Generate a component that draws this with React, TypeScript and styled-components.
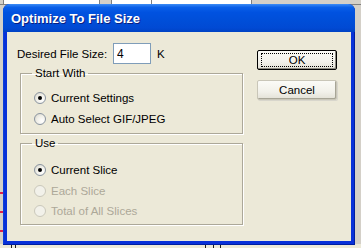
import React from 'react';
import styled, { createGlobalStyle, css } from 'styled-components';

const GlobalStyle = createGlobalStyle`
  html, body {
    margin: 0;
    padding: 0;
    background: #d4d0c8;
  }
  * {
    box-sizing: border-box;
  }
`;

const uiFont = `'Liberation Sans', Arial, sans-serif`;

const Desktop = styled.div`
  position: relative;
  width: 361px;
  height: 248px;
  overflow: hidden;
  background: #d4d0c8;
  font-family: ${uiFont};
`;

const Backdrop = styled.div`
  display: flex;
  flex-direction: column;
  height: 100%;
`;

const HeaderStrip = styled.div`
  display: flex;
  height: 5px;
  border-bottom: 1px solid #808080;
`;

const HeaderCell = styled.div<{ $w: number; $light?: boolean }>`
  width: ${({ $w }) => $w}px;
  flex: none;
  background: ${({ $light }) => ($light ? '#ffffff' : '#d4d0c8')};
  border-right: 1px solid #808080;
`;

const MiddleArea = styled.div`
  flex: 1;
  display: flex;
`;

const Gutter = styled.div`
  width: 3px;
  display: flex;
  flex-direction: column;
  padding-top: 187px;
  gap: 17px;
`;

const RedMark = styled.div`
  height: 2px;
  width: 3px;
  background: #e0204a;
`;

const FooterStrip = styled.div`
  display: flex;
  height: 4px;
  background: #ece9d8;
`;

const FooterCell = styled.div<{ $w: number }>`
  width: ${({ $w }) => $w}px;
  flex: none;
  border-right: 1px solid #202020;
`;

const Window = styled.div`
  position: absolute;
  left: 3px;
  top: 4px;
  width: 352px;
  height: 241px;
  display: flex;
  flex-direction: column;
  background: #0831d9;
  border-radius: 7px 7px 0 0;
  box-shadow: inset -1px -1px 0 #001ea0, inset 1px 0 0 #0a3fd9;
`;

const TitleBar = styled.div`
  height: 28px;
  flex: none;
  display: flex;
  align-items: center;
  padding-left: 8px;
  border-radius: 7px 7px 0 0;
  background: linear-gradient(
    to bottom,
    #3d8cf5 0%,
    #0a5fe8 12%,
    #0052e0 30%,
    #004ed8 60%,
    #014ad4 85%,
    #0042c4 100%
  );
`;

const TitleText = styled.span`
  color: #ffffff;
  font-family: ${uiFont};
  font-weight: bold;
  font-size: 13px;
  text-shadow: 1px 1px 0 #0a1e80;
  padding-top: 1px;
`;

const Client = styled.div`
  flex: 1;
  margin: 0 4px 4px 4px;
  background: #ece9d8;
  display: flex;
  padding: 11px 0 0 10px;
  font-size: 11px;
  color: #000000;
`;

const FormColumn = styled.div`
  width: 226px;
  display: flex;
  flex-direction: column;
`;

const SizeRow = styled.div`
  display: flex;
  align-items: center;
  height: 21px;
`;

const Label = styled.span`
  font-size: 11.5px;
  width: 96px;
`;

const SizeInput = styled.input`
  width: 38px;
  height: 21px;
  border: 1px solid #7f9db9;
  background: #ffffff;
  font-family: ${uiFont};
  font-size: 12px;
  padding: 0 3px;
  outline: none;
`;

const Unit = styled.span`
  font-size: 11.5px;
  margin-left: 6px;
`;

const GroupBox = styled.fieldset<{ $top: number; $height: number }>`
  margin: ${({ $top }) => $top}px 0 0 3px;
  height: ${({ $height }) => $height}px;
  padding: 0 0 0 13px;
  border: 1px solid #aca899;
  box-shadow: 1px 1px 0 #ffffff, inset 1px 1px 0 #ffffff;
  display: flex;
  flex-direction: column;
`;

const Legend = styled.legend`
  font-size: 11.5px;
  padding: 0 3px;
  margin-left: -2px;
`;

const RadioRow = styled.div<{ $disabled?: boolean }>`
  display: flex;
  align-items: center;
  height: 20.5px;
  font-size: 11.5px;
  color: ${({ $disabled }) => ($disabled ? '#aca899' : '#000000')};
`;

const RadioDot = styled.span<{ $checked?: boolean; $disabled?: boolean }>`
  width: 12px;
  height: 12px;
  border-radius: 50%;
  flex: none;
  margin-right: 5px;
  position: relative;
  border: 1px solid ${({ $disabled }) => ($disabled ? '#cac8bb' : '#8a94a0')};
  background: ${({ $disabled }) =>
    $disabled
      ? '#f2f1ea'
      : 'radial-gradient(circle at 70% 70%, #ffffff 0%, #f0efe8 50%, #d6d3c6 100%)'};
  ${({ $checked }) =>
    $checked &&
    css`
      &::after {
        content: '';
        position: absolute;
        left: 3px;
        top: 3px;
        width: 4px;
        height: 4px;
        border-radius: 50%;
        background: #000000;
      }
    `}
`;

const RadioGroup = styled.div<{ $pad: number }>`
  display: flex;
  flex-direction: column;
  padding-top: ${({ $pad }) => $pad}px;
`;

const ButtonColumn = styled.div`
  display: flex;
  flex-direction: column;
  gap: 10px;
  padding: 7px 0 0 14px;
`;

const Button = styled.button<{ $default?: boolean }>`
  width: 80px;
  height: 20px;
  font-family: ${uiFont};
  font-size: 11.5px;
  color: #000000;
  padding: 0;
  border-radius: 2px;
  background: linear-gradient(to bottom, #fbfbf7 0%, #f2f1ea 60%, #e3e1d6 100%);
  border: 1px solid ${({ $default }) => ($default ? '#000000' : '#c9c6b8')};
  box-shadow: ${({ $default }) =>
    $default ? 'inset -1px -1px 0 #8c8a80' : 'inset -1px -1px 0 #a7a596, 1px 1px 0 #d8d6cc'};
  display: flex;
  align-items: center;
  justify-content: center;
`;

const FocusRing = styled.span`
  width: 72px;
  height: 14px;
  border: 1px dotted #000000;
  display: flex;
  align-items: center;
  justify-content: center;
  line-height: 12px;
`;

type RadioOption = { label: string; checked?: boolean; disabled?: boolean };

const startWith: RadioOption[] = [
  { label: 'Current Settings', checked: true },
  { label: 'Auto Select GIF/JPEG' },
];

const useOptions: RadioOption[] = [
  { label: 'Current Slice', checked: true },
  { label: 'Each Slice', disabled: true },
  { label: 'Total of All Slices', disabled: true },
];

const Radios = ({ items }: { items: RadioOption[] }) => (
  <>
    {items.map((item) => (
      <RadioRow key={item.label} $disabled={item.disabled}>
        <RadioDot $checked={item.checked} $disabled={item.disabled} />
        {item.label}
      </RadioRow>
    ))}
  </>
);

export default function App() {
  return (
    <Desktop>
      <GlobalStyle />
      <Backdrop>
        <HeaderStrip>
          <HeaderCell $w={4} />
          <HeaderCell $w={96} $light />
          <HeaderCell $w={12} />
          <HeaderCell $w={40} $light />
          <HeaderCell $w={100} $light />
        </HeaderStrip>
        <MiddleArea>
          <Gutter>
            <RedMark />
            <RedMark />
            <RedMark />
          </Gutter>
        </MiddleArea>
        <FooterStrip>
          <FooterCell $w={12} />
          <FooterCell $w={4} />
          <FooterCell $w={190} />
          <FooterCell $w={8} />
          <FooterCell $w={7} />
        </FooterStrip>
      </Backdrop>
      <Window>
        <TitleBar>
          <TitleText>Optimize To File Size</TitleText>
        </TitleBar>
        <Client>
          <FormColumn>
            <SizeRow>
              <Label>Desired File Size:</Label>
              <SizeInput defaultValue="4" />
              <Unit>K</Unit>
            </SizeRow>
            <GroupBox $top={3} $height={67}>
              <Legend>Start With</Legend>
              <RadioGroup $pad={9}>
                <Radios items={startWith} />
              </RadioGroup>
            </GroupBox>
            <GroupBox $top={3} $height={88}>
              <Legend>Use</Legend>
              <RadioGroup $pad={11}>
                <Radios items={useOptions} />
              </RadioGroup>
            </GroupBox>
          </FormColumn>
          <ButtonColumn>
            <Button $default>
              <FocusRing>OK</FocusRing>
            </Button>
            <Button>Cancel</Button>
          </ButtonColumn>
        </Client>
      </Window>
    </Desktop>
  );
}
